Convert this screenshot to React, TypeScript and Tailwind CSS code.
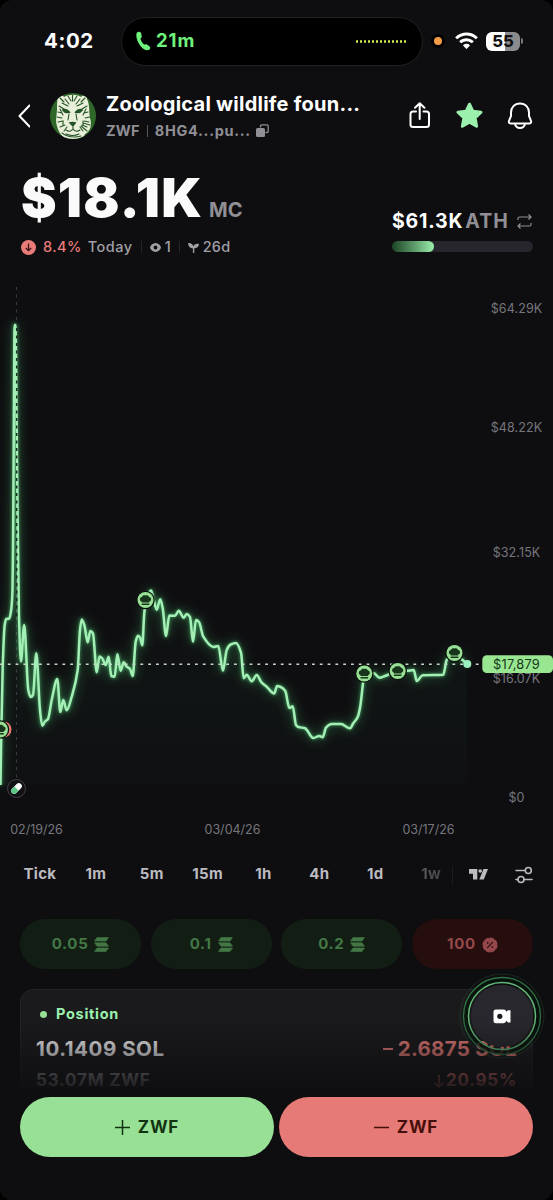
import { clsx } from "clsx";

const timeframes = ["Tick", "1m", "5m", "15m", "1h", "4h", "1d", "1w"];

const quickBuys = ["0.05", "0.1", "0.2"];

const priceTicks = [
  { label: "$64.29K", y: 308 },
  { label: "$48.22K", y: 427 },
  { label: "$32.15K", y: 552.5 },
  { label: "$16.07K", y: 678.5 },
  { label: "$0", y: 797.5 },
];

const dateTicks = [
  { label: "02/19/26", x: 36.5 },
  { label: "03/04/26", x: 232.5 },
  { label: "03/17/26", x: 428.5 },
];

const trades = [
  { x: 145.5, y: 600 },
  { x: 364.3, y: 673.5 },
  { x: 397.7, y: 671 },
  { x: 454.5, y: 653 },
];

const points: [number, number][] = [
  [0.5, 785], [1.2, 737], [2.7, 667], [4.7, 625], [6.2, 619], [9.3, 618.5], [11.3, 609], [12.5, 590],
  [13, 550], [13.5, 480], [14.6, 325], [15.4, 325], [17.2, 480], [18, 550], [19, 617], [20.9, 661.5], [24.2, 625],
  [28.3, 690], [30.7, 697], [33, 695], [36.3, 653.3], [40, 710], [42.3, 725.7], [45, 721.5], [48, 719],
  [51.7, 700], [57.3, 679], [60.3, 712], [63.3, 700], [66.7, 710.3], [71.7, 696.7], [77.7, 670], [80, 630],
  [81.7, 619.5], [84.3, 625], [87.7, 642.3], [90.3, 631], [93, 633.5], [96.7, 672.3], [99.5, 656.5],
  [102.3, 658.5], [105.7, 665], [108.7, 656.7], [111.3, 676], [114.7, 676.7], [117.3, 654.3], [120.7, 670.7],
  [123.7, 662.3], [126.7, 666.7], [130, 669], [132.7, 676], [135.7, 641.7], [137.9, 635.7], [140, 637.5],
  [142.3, 645.3], [144.3, 613], [146.5, 599], [151, 590.5], [153.3, 598], [156.7, 609.7], [160.2, 599.3],
  [162.7, 608.3], [166, 636], [169.3, 615.5], [175, 615.8], [178.7, 610.7], [183.7, 617.7], [186.7, 614],
  [190, 617], [193, 641.7], [196, 620], [199, 622], [203.3, 636.7], [213.3, 647], [218.3, 646], [223, 670.7],
  [226.7, 650], [230.7, 644.5], [236, 643], [241, 652.7], [243.7, 678.3], [246.7, 674.7], [251.7, 681.3],
  [256.7, 675], [261.7, 682.7], [266.7, 686.7], [274.3, 693.5], [277, 686], [280.7, 687], [285.3, 691],
  [289.3, 708], [292.7, 706.3], [296, 725], [298.3, 727], [305, 728.3], [313.3, 738], [319.3, 736],
  [322.7, 737.3], [326, 727.7], [331.7, 724], [341, 724], [350, 728.3], [353.3, 723.3], [357.7, 717],
  [360.2, 706.7], [363, 683.3], [364.5, 673.5], [374, 673.3], [379.3, 677.7], [385, 676], [398, 671],
  [406.7, 670.8], [413.8, 670], [416.7, 681], [422.7, 675.3], [443.3, 674.7], [446.7, 660], [454.3, 652.7],
  [461.7, 659.3], [467.3, 664],
];

// monotone cubic interpolation, so the peaks stay where the data puts them
function buildPath(p: [number, number][]) {
  const n = p.length;
  const slope = p.slice(1).map((q, i) => (q[1] - p[i][1]) / (q[0] - p[i][0]));
  const tan = p.map((_, i) => {
    if (i === 0) return slope[0];
    if (i === n - 1) return slope[n - 2];
    const a = slope[i - 1];
    const b = slope[i];
    return a * b <= 0 ? 0 : (2 * a * b) / (a + b);
  });
  let d = `M${p[0][0]},${p[0][1]}`;
  for (let i = 0; i < n - 1; i++) {
    const h = (p[i + 1][0] - p[i][0]) / 3;
    d += `C${p[i][0] + h},${p[i][1] + tan[i] * h} ${p[i + 1][0] - h},${p[i + 1][1] - tan[i + 1] * h} ${p[i + 1][0]},${p[i + 1][1]}`;
  }
  return d;
}

const linePath = buildPath(points);

function StatusBar() {
  return (
    <div className="flex h-[82px] shrink-0 items-center">
      <span className="w-[121px] pl-[44px] text-[20.5px] font-bold tracking-[0.6px]">4:02</span>
      <div className="flex h-[49px] w-[302px] items-center rounded-full border border-[#222224] bg-black pl-[14px] pr-[16px]">
        <svg width="15" height="20" viewBox="0 0 15 20" fill="#6ff27b">
          <path d="M2.3.8C3.7.3 4.900 1 5.300 2.700L5.700 5.300C5.800 6.400 5.200 7.100 4.500 7.700C5 10 6.500 12.300 8.300 13.600C9.200 13.100 10.100 12.900 11 13.600L13.600 15.600C14.700 16.600 14.400 18 13.100 18.800C10.800 20.100 7.500 18.700 4.700 15.300C1.800 11.800.2 7.500.3 4C.4 2.200 1 1.200 2.300.8Z" />
        </svg>
        <span className="ml-[5px] text-[18.5px] font-bold tracking-[0.9px] text-[#6ff27b]">21m</span>
        <span className="ml-auto flex gap-[2px]">
          {Array.from({ length: 13 }, (_, i) => (
            <i key={i} className="h-[3px] w-[2px] rounded-full bg-[#d5e84f]" />
          ))}
        </span>
      </div>
      <span className="ml-[8px] flex size-[14px] items-center justify-center rounded-full bg-black">
        <i className="size-[8px] rounded-full bg-[#f39a45]" />
      </span>
      <svg className="ml-[10px]" width="23" height="18" viewBox="0 0 23 18" fill="#fff">
        <path d="M11.500.5C7.200.5 3.300 2.200.5 4.900a.5.5 0 0 0 0 .8l1.400 1.400c.2.200.5.200.7 0A12.800 12.800 0 0 1 11.500 3.600c3.500 0 6.600 1.300 8.900 3.500.2.200.5.200.7 0l1.400-1.400a.5.5 0 0 0 0-.8A15.900 15.900 0 0 0 11.500.5Z" />
        <path d="M11.500 6.200c-2.700 0-5.200 1-7.100 2.700a.5.5 0 0 0 0 .7l1.500 1.500c.2.200.5.200.7 0a7.400 7.400 0 0 1 9.800 0c.2.200.5.200.7 0l1.500-1.500a.5.5 0 0 0 0-.7 10.400 10.400 0 0 0-7.100-2.700Z" />
        <path d="M11.500 11.800c-1.200 0-2.300.4-3.200 1.100a.5.5 0 0 0 0 .8l2.800 3.100c.2.200.6.200.8 0l2.800-3.100a.5.5 0 0 0 0-.8 5 5 0 0 0-3.200-1.100Z" />
      </svg>
      <span className="ml-[8px] flex h-[19px] w-[34px] items-center justify-center rounded-[6px] bg-[linear-gradient(90deg,#fff_55%,#8b8b8d_55%)] text-[16.5px] font-extrabold leading-[19px] text-[#111113]">
        55
      </span>
      <i className="ml-[1px] h-[6px] w-[2px] rounded-r-full bg-[#77777a]" />
    </div>
  );
}

function TigerAvatar() {
  return (
    <svg className="ml-[20px] shrink-0" width="46" height="46" viewBox="0 0 46 46">
      <defs>
        <clipPath id="avatar">
          <circle cx="23" cy="23" r="23" />
        </clipPath>
      </defs>
      <g clipPath="url(#avatar)">
        <rect width="46" height="46" fill="#2f6729" />
        <path
          d="M8 4C9 1 12 1 14 4C19 1 27 1 31 4C34 1 37 2 37 6C40 12 39 20 40 25C42 31 41 38 35 41L33 46H16C10 42 8 37 7 33C5 27 7 22 7 16C7 11 7 8 8 4Z"
          fill="#e9efd9"
        />
        <g fill="none" stroke="#245426" strokeLinecap="round" strokeWidth="1.100">
          <path d="M10 5l4 4M35 5l-4 4M18 3l3 5M27 3l-3 5M22.500 2v6M15 6l4 5M30 6l-4 5M12 10l6 3M33 10l-6 3M9 13l5 3M37 13l-5 3" />
          <path d="M8 19l4 1M38 19l-4 1M7 24l5 1M40 24l-5 1M8 29l5-1M39 29l-5-1M10 34l5-2M37 34l-5-2M10 16l3 6M36 16l-3 6M14 38l3-4M33 38l-3-4" />
          <path d="M13 17q4-1 6 2q-4 1-6-2M32 17q-4-1-6 2q4 1 6-2" strokeWidth="2" />
          <path d="M19 21l-1 6M26 21l1 6M23 34v2M23 36q-3 4-7 1M23 36q3 4 7 1M16 41q7 3 13 0" />
          <path d="M13 28v4M33 28v4M12 40q8 6 19 3M31 33l6 5M33 30l7 2" />
        </g>
        <path d="M18.500 29.500q4-1.500 8 0L23 34z" fill="#245426" />
      </g>
    </svg>
  );
}

function Header() {
  return (
    <div className="flex h-[68px] shrink-0 items-center pl-[18px] text-white">
      <svg width="12" height="24" viewBox="0 0 12 24" fill="none" stroke="currentColor" strokeWidth="2">
        <path d="M11.500 1.500L1.500 12L11.500 22.500" strokeLinecap="round" strokeLinejoin="round" />
      </svg>
      <TigerAvatar />
      <div className="ml-[10px] w-[290px] pt-[2px]">
        <h1 className="whitespace-nowrap text-[20px] font-bold leading-[26px] tracking-[0.25px]">
          Zoological wildlife foun...
        </h1>
        <p className="mt-[1px] flex items-center whitespace-nowrap text-[14.5px] font-bold leading-[26px] text-[#908f95]">
          <span className="tracking-[0.2px]">ZWF</span>
          <i className="mx-[7px] h-[12px] w-px bg-[#55555a]" />
          <span className="tracking-[0.7px]">8HG4...pu...</span>
          <svg className="ml-[5px]" width="13" height="13" viewBox="0 0 13 13">
            <path d="M4.500 3.500V2q0-1.200 1.200-1.200h5.300q1.200 0 1.200 1.200v5.300q0 1.200-1.200 1.200H9.500" fill="none" stroke="currentColor" strokeWidth="1.300" />
            <rect x="0" y="4" width="9" height="9" rx="1.500" fill="currentColor" />
          </svg>
        </p>
      </div>
      <svg className="ml-[11px]" width="26" height="28" viewBox="0 0 26 28" fill="none" stroke="currentColor" strokeWidth="2" strokeLinecap="round" strokeLinejoin="round">
        <path d="M9 9.500H6Q3.500 9.500 3.500 12v10.500q0 2.500 2.500 2.500h13.500Q22 25 22 22.500V12q0-2.500-2.500-2.500H16.500M12.700 17V1.500M8 5.800L12.700 1.200L17.400 5.800" />
      </svg>
      <svg className="ml-[23px]" width="27" height="28" viewBox="0 0 27 28" fill="#9bf0ae" stroke="#9bf0ae" strokeWidth="3" strokeLinejoin="round">
        <path d="M13.500 2.200L16.900 9.300L25 10.200L19.100 15.800L20.600 24.200L13.500 20.300L6.400 24.200L7.900 15.800L2 10.200L10.100 9.300Z" />
      </svg>
      <svg className="ml-[24px]" width="26" height="28" viewBox="0 0 26 28" fill="none" stroke="currentColor" strokeWidth="2" strokeLinejoin="round">
        <path d="M13 1.500C7.500 1.500 4 5.500 4 10.500V14L2 18.800Q1.300 21.300 3.700 21.500H22.300Q24.700 21.300 24 18.800L22 14V10.500C22 5.500 18.500 1.500 13 1.500Z" />
        <path d="M8 22Q9 26 13 26T18 22" />
      </svg>
    </div>
  );
}

function MarketCap() {
  return (
    <div className="flex h-[120px] shrink-0 justify-between pl-[21px] pr-[20px]">
      <div className="pt-[17px]">
        <div className="flex h-[62px] items-baseline whitespace-nowrap leading-[62px]">
          <span className="text-[53.5px] font-black tracking-[1.2px] text-[#fafafa]">$18.1K</span>
          <span className="ml-[6px] text-[20px] font-bold text-[#908f95]">MC</span>
        </div>
        <div className="mt-[7px] flex h-[22px] items-center whitespace-nowrap text-[14.5px] font-medium text-[#a09fa5]">
          <svg width="15" height="15" viewBox="0 0 15 15">
            <circle cx="7.500" cy="7.500" r="7.500" fill="#e87c79" />
            <path d="M7.500 3.500v7M4.800 8l2.700 2.700L10.200 8" fill="none" stroke="#3a1416" strokeWidth="1.300" />
          </svg>
          <span className="ml-[7px] tracking-[0.4px] text-[#e87c79]">8.4%</span>
          <span className="ml-[6px] tracking-[0.5px]">Today</span>
          <i className="mx-[8px] h-[12px] w-px bg-[#242428]" />
          <svg width="11" height="9" viewBox="0 0 11 9">
            <path d="M5.500 0C8.400 0 10.300 2.200 11 4.500C10.300 6.800 8.400 9 5.500 9S.7 6.800 0 4.500C.7 2.200 2.600 0 5.500 0Z" fill="currentColor" />
            <circle cx="5.500" cy="4.500" r="1.900" fill="#0e0e10" />
          </svg>
          <span className="ml-[4px]">1</span>
          <i className="mx-[8px] h-[12px] w-px bg-[#242428]" />
          <svg width="11" height="11" viewBox="0 0 11 11" fill="currentColor">
            <path d="M0 1C3 .8 5 2 5.200 4.500C6 2.500 8 1.500 11 2C10.800 4.700 9 6.300 6.300 6.200V11H4.900V6.400C2 6.400.2 4.500 0 1Z" />
          </svg>
          <span className="ml-[4px] tracking-[0.2px]">26d</span>
        </div>
      </div>
      <div className="w-[141px] pt-[59px]">
        <div className="flex h-[25px] items-center whitespace-nowrap text-[19.5px] font-bold">
          <span className="tracking-[0.8px] text-white">$61.3K</span>
          <span className="ml-[2px] tracking-[1px] text-[#908f95]">ATH</span>
          <svg className="ml-auto mr-[1px]" width="15" height="15" viewBox="0 0 15 15" fill="none" stroke="#908f95" strokeWidth="1.200" strokeLinejoin="round">
            <path d="M1 6V4.500Q1 3 2.500 3H14M11.500.5L14 3L11.500 5.500M14 9v1.500Q14 12 12.500 12H1M3.500 9.500L1 12L3.500 14.500" />
          </svg>
        </div>
        <div className="mt-[7px] h-[11px] overflow-hidden rounded-full bg-[#27262d]">
          <div className="h-full w-[42px] rounded-full bg-linear-to-r from-[#1d4526] to-[#9bf0ae]" />
        </div>
      </div>
    </div>
  );
}

function ChefMarker({ x, y }: { x: number; y: number }) {
  return (
    <g transform={`translate(${x} ${y})`}>
      <circle r="9.300" fill="#0a140c" />
      <circle r="8" fill="#98e095" />
      <path
        d="M-3.800 1.500C-6.200.8-6.200-2.600-3.600-3.100C-2.800-5-1-5.200 0-4.500C1-5.200 2.800-5 3.600-3.100C6.200-2.600 6.200.8 3.800 1.500V2.500H-3.800ZM-3.800 3.400H3.800V4.900H-3.800Z"
        fill="#16351b"
      />
    </g>
  );
}

function PriceChart() {
  return (
    <svg className="block shrink-0" width="553" height="580" viewBox="0 270 553 580">
      <defs>
        <linearGradient id="area" x1="0" x2="0" y1="600" y2="785" gradientUnits="userSpaceOnUse">
          <stop offset="0" stopColor="#5ee3a0" stopOpacity="0" />
          <stop offset="0.500" stopColor="#5ee3a0" stopOpacity="0.030" />
          <stop offset="1" stopColor="#5ee3a0" stopOpacity="0.010" />
        </linearGradient>
        <filter id="glow" filterUnits="userSpaceOnUse" x="-30" y="280" width="540" height="540">
          <feGaussianBlur stdDeviation="6" />
        </filter>
        <filter id="halo" filterUnits="userSpaceOnUse" x="-30" y="280" width="540" height="540">
          <feGaussianBlur stdDeviation="1.800" />
        </filter>
      </defs>
      <path d={`${linePath}V785H0Z`} fill="url(#area)" />
      <path d="M16.500 287V780" stroke="#3c3c40" strokeWidth="1" strokeDasharray="3 4.500" />
      <path d={linePath} fill="none" stroke="#4fc774" strokeWidth="5" opacity="0.350" filter="url(#glow)" />
      <path d={linePath} fill="none" stroke="#4fc774" strokeWidth="4" opacity="0.500" filter="url(#halo)" />
      <path d={linePath} fill="none" stroke="#a3efb5" strokeWidth="2.500" strokeLinejoin="round" />
      <path d="M16.700 328V616" stroke="#143020" strokeWidth="1.500" strokeDasharray="3 4.500" />
      <path d="M0 664.300H482" stroke="#c5d8c8" strokeWidth="1.500" strokeDasharray="2.800 5" />
      <circle cx="3.500" cy="729.500" r="8.500" fill="#e87c79" stroke="#0a140c" strokeWidth="1" />
      <ChefMarker x={0} y={729.500} />
      {trades.map((t) => (
        <ChefMarker key={t.x} x={t.x} y={t.y} />
      ))}
      <circle cx="467.300" cy="664" r="4" fill="#9bf0c0" />
      <g transform="translate(16.500 788.500)">
        <circle r="9" fill="#111114" stroke="#424047" />
        <g transform="rotate(45)">
          <rect x="-3" y="-6.300" width="6" height="12.600" rx="3" fill="#fff" />
          <path d="M-3 0H3V3.300A3 3 0 0 1-3 3.300Z" fill="#5fc583" />
        </g>
      </g>
      <g fill="#77767c" fontSize="12.500" textAnchor="middle">
        {priceTicks.map((t) => (
          <text key={t.label} x="516.500" y={t.y + 4.500} letterSpacing="0.1">{t.label}</text>
        ))}
        {dateTicks.map((t) => (
          <text key={t.label} x={t.x} y="833.500">{t.label}</text>
        ))}
      </g>
      <rect x="482.300" y="655.300" width="70.700" height="17.700" rx="4.500" fill="#98e68f" />
      <text x="516.500" y="668.800" fill="#16351b" fontSize="12.800" letterSpacing="0.2" textAnchor="middle">$17,879</text>
    </svg>
  );
}

function Timeframes() {
  return (
    <div className="flex h-[49px] shrink-0 items-center pl-[12px] text-[#bcbbc0]">
      {timeframes.map((t) => (
        <span
          key={t}
          className={clsx(
            "w-[55.9px] text-center text-[15px] font-bold tracking-[0.3px]",
            t === "1w" && "bg-linear-to-r from-[#69686d] to-[#38373b] bg-clip-text text-transparent",
          )}
        >
          {t}
        </span>
      ))}
      <i className="-ml-[7px] h-[18px] w-px bg-[#1d1d20]" />
      <svg className="ml-[16px]" width="19" height="11" viewBox="0 0 19 11" fill="currentColor">
        <path d="M0 0H8.300V10.500H4V4.800H0ZM14.500 0H19L14.800 10.500H10.300Z" />
        <circle cx="11.200" cy="2" r="1.800" />
      </svg>
      <svg className="ml-[27px]" width="18" height="18" viewBox="0 0 18 18" fill="none" stroke="currentColor" strokeWidth="1.600" strokeLinecap="round">
        <path d="M1 4.500H10M1 13.500H3M9 13.500H17" />
        <circle cx="13.300" cy="4.500" r="3" />
        <circle cx="6" cy="13.500" r="3" />
      </svg>
    </div>
  );
}

function SolIcon() {
  return (
    <svg width="15" height="15" viewBox="0 0 15 15" fill="currentColor">
      <path d="M3 .5H14.500L12 4H.5ZM.5 5.750H12L14.500 9.250H3ZM3 11H14.500L12 14.500H.5Z" stroke="currentColor" strokeWidth=".6" strokeLinejoin="round" />
    </svg>
  );
}

function QuickTrade() {
  return (
    <div className="mt-[20px] grid h-[50px] shrink-0 grid-cols-4 gap-[9.500px] px-[20px] text-[15px] font-bold tracking-[0.700px]">
      {quickBuys.map((amount) => (
        <button key={amount} className="flex items-center justify-center gap-[6px] rounded-full bg-[#121e13] pt-px text-[#437846]">
          {amount}
          <SolIcon />
        </button>
      ))}
      <button className="flex items-center justify-center gap-[6px] rounded-full bg-[#260d0e] pt-px text-[#95484a]">
        100
        <svg width="16" height="16" viewBox="0 0 16 16">
          <circle cx="8" cy="8" r="6.800" fill="currentColor" stroke="currentColor" strokeWidth="1.500" strokeDasharray="3.500 1.840" strokeLinecap="round" />
          <path d="M5.200 10.800L10.800 5.200" stroke="#260d0e" strokeWidth="1.200" />
          <circle cx="5.700" cy="5.900" r="0.900" fill="#260d0e" />
          <circle cx="10.300" cy="10.100" r="0.900" fill="#260d0e" />
        </svg>
      </button>
    </div>
  );
}

function PositionCard() {
  return (
    <div className="mx-[20px] mt-[20px] grow rounded-t-[14px] border border-b-0 border-[#232327] bg-[#1a1a1c] px-[15px] pt-[11px]">
      <div className="flex h-[26px] items-center text-[14.5px] font-bold tracking-[0.700px] text-[#9bf0ae]">
        <i className="ml-[4px] mr-[9px] size-[7px] rounded-full bg-[#98e095]" />
        Position
      </div>
      <div className="mt-[8px] flex h-[28px] items-center justify-between text-[20.5px] font-bold">
        <span className="tracking-[0.550px] text-[#f4f3f6]">10.1409 SOL</span>
        <span className="flex items-center gap-[5px] tracking-[0.300px] text-[#e87c79]">
          <i className="h-[1.500px] w-[10px] bg-[#e87c79]" />
          2.6875 SOL
        </span>
      </div>
      <div className="mt-[5px] flex h-[26px] items-center justify-between text-[17px] font-bold tracking-[0.800px]">
        <span className="text-[#a09fa5]">53.07M ZWF</span>
        <span className="flex items-center gap-[2px] text-[#e87c79]">
          <svg width="10" height="13" viewBox="0 0 10 13" fill="none" stroke="currentColor" strokeWidth="1.300">
            <path d="M5 0V12M.8 8L5 12L9.200 8" />
          </svg>
          20.95%
        </span>
      </div>
    </div>
  );
}

function RecordButton() {
  return (
    <button className="absolute right-[7px] top-[972px] flex size-[88px] items-center justify-center">
      <svg width="88" height="88" viewBox="0 0 88 88">
        <circle cx="44" cy="44" r="42" fill="none" stroke="#2e6b42" strokeOpacity="0.300" />
        <circle cx="44" cy="44" r="36" fill="none" stroke="#06140b" strokeOpacity="0.800" strokeWidth="6" />
        <circle cx="44" cy="44" r="38.500" fill="none" stroke="#3b8a52" strokeOpacity="0.800" strokeWidth="1.300" />
        <circle cx="44" cy="44" r="33.500" fill="none" stroke="#65b87a" strokeWidth="1.500" />
        <circle cx="44" cy="44" r="31" fill="#28272d" />
        <path
          d="M38 37.500H45.500Q48 37.500 48.300 39.800L50 38.300H52.500V50.500H50L48.300 48.800Q48 51.200 45.500 51.200H38Q35.500 51.200 35.500 48.700V40Q35.500 37.500 38 37.500Z"
          fill="#fff"
        />
        <circle cx="41.800" cy="44.300" r="2.600" fill="#1d1c21" />
      </svg>
    </button>
  );
}

function BottomBar() {
  return (
    <div className="absolute inset-x-0 bottom-0">
      <div className="h-[76px] bg-linear-to-b from-[#0e0e10]/0 to-[#0e0e10]" />
      <div className="flex h-[103px] gap-[5px] bg-[#0e0e10] px-[20px] text-[17px] font-bold tracking-[0.800px]">
        <button className="flex h-[60px] flex-1 items-center justify-center gap-[8px] rounded-full bg-[#98e095] pt-px text-[#12330f]">
          <svg width="15" height="15" viewBox="0 0 15 15" stroke="currentColor" strokeWidth="1.500">
            <path d="M7.500 0V15M0 7.500H15" />
          </svg>
          ZWF
        </button>
        <button className="flex h-[60px] flex-1 items-center justify-center gap-[8px] rounded-full bg-[#e57a76] pt-px text-[#450f0b]">
          <svg width="15" height="15" viewBox="0 0 15 15" stroke="currentColor" strokeWidth="1.500">
            <path d="M0 7.500H15" />
          </svg>
          ZWF
        </button>
      </div>
    </div>
  );
}

export default function App() {
  return (
    <div className="bg-black font-['Inter',sans-serif]">
      <main className="relative flex h-[1200px] w-[553px] flex-col overflow-hidden rounded-[12px] bg-[#0e0e10] text-white">
        <StatusBar />
        <Header />
        <MarketCap />
        <PriceChart />
        <Timeframes />
        <QuickTrade />
        <PositionCard />
        <RecordButton />
        <BottomBar />
      </main>
    </div>
  );
}
